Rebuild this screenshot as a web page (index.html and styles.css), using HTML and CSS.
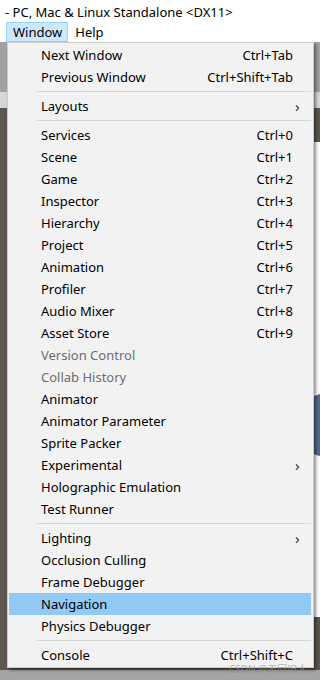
FILE: index.html
```html
<!DOCTYPE html>
<html lang="en">
<head>
    <meta charset="UTF-8">
    <meta name="viewport" content="width=device-width, initial-scale=1.0">
    <title>Window Menu</title>
    <link rel="stylesheet" href="styles.css">
</head>
<body>

    <div class="title-bar">- PC, Mac &amp; Linux Standalone &lt;DX11&gt;</div>

    <div class="menu-bar">
        <span class="menu-title active">Window</span>
        <span class="menu-title">Help</span>
    </div>

    <!-- Editor behind the menu -->
    <div class="workspace">
        <div class="toolbar"></div>
        <div class="tab-strip"></div>
        <div class="panels">
            <div class="panel-left"></div>
            <div class="panel-right">
                <div class="scene-view">
                    <div class="scene-blob"></div>
                </div>
            </div>
        </div>
        <div class="status-bar"></div>
    </div>

    <!-- Window dropdown -->
    <div class="dropdown">
        <div class="item"><span>Next Window</span><span class="key">Ctrl+Tab</span></div>
        <div class="item"><span>Previous Window</span><span class="key">Ctrl+Shift+Tab</span></div>
        <div class="sep"></div>
        <div class="item"><span>Layouts</span><span class="arrow">&rsaquo;</span></div>
        <div class="sep"></div>
        <div class="item"><span>Services</span><span class="key">Ctrl+0</span></div>
        <div class="item"><span>Scene</span><span class="key">Ctrl+1</span></div>
        <div class="item"><span>Game</span><span class="key">Ctrl+2</span></div>
        <div class="item"><span>Inspector</span><span class="key">Ctrl+3</span></div>
        <div class="item"><span>Hierarchy</span><span class="key">Ctrl+4</span></div>
        <div class="item"><span>Project</span><span class="key">Ctrl+5</span></div>
        <div class="item"><span>Animation</span><span class="key">Ctrl+6</span></div>
        <div class="item"><span>Profiler</span><span class="key">Ctrl+7</span></div>
        <div class="item"><span>Audio Mixer</span><span class="key">Ctrl+8</span></div>
        <div class="item"><span>Asset Store</span><span class="key">Ctrl+9</span></div>
        <div class="item disabled"><span>Version Control</span></div>
        <div class="item disabled"><span>Collab History</span></div>
        <div class="item"><span>Animator</span></div>
        <div class="item"><span>Animator Parameter</span></div>
        <div class="item"><span>Sprite Packer</span></div>
        <div class="item"><span>Experimental</span><span class="arrow">&rsaquo;</span></div>
        <div class="item"><span>Holographic Emulation</span></div>
        <div class="item"><span>Test Runner</span></div>
        <div class="sep"></div>
        <div class="item"><span>Lighting</span><span class="arrow">&rsaquo;</span></div>
        <div class="item"><span>Occlusion Culling</span></div>
        <div class="item"><span>Frame Debugger</span></div>
        <div class="item selected"><span>Navigation</span></div>
        <div class="item"><span>Physics Debugger</span></div>
        <div class="sep"></div>
        <div class="item"><span>Console</span><span class="key">Ctrl+Shift+C</span></div>
    </div>

    <div class="watermark">CSDN @不回旧人</div>

</body>
</html>
```

FILE: styles.css
```css
body {
    margin: 0;
    padding: 0;
    width: 320px;
    height: 680px;
    overflow: hidden;
    background-color: #ffffff;
    font-family: "Noto Sans", Arial, "Noto Sans CJK SC", sans-serif;
    font-size: 13px;
    color: #000;
    position: relative;
}
.title-bar {
    height: 22px;
    line-height: 24px;
    padding-left: 5px;
    font-size: 13px;
    white-space: nowrap;
}
.menu-bar {
    height: 20px;
    display: flex;
    align-items: flex-start;
    padding-left: 6px;
}
.menu-title {
    height: 18px;
    line-height: 18px;
    padding: 0 5px 0 6px;
    border: 1px solid transparent;
    font-size: 13px;
}
.menu-title.active {
    background-color: #cce8ff;
    border-color: #99d1ff;
}
/* Editor behind */
.workspace {
    height: 638px;
    display: flex;
    flex-direction: column;
}
.toolbar {
    height: 50px;
    background-color: #a2a2a2;
}
.tab-strip {
    height: 16px;
    background-color: #d6d6d6;
}
.panels {
    flex: 1;
    display: flex;
    background-color: #5c5550;
}
.panel-left {
    width: 200px;
}
.panel-right {
    flex: 1;
    padding-top: 34px;
    padding-bottom: 53px;
    display: flex;
}
.scene-view {
    flex: 1;
    background-color: #ffffff;
    position: relative;
    overflow: hidden;
}
.scene-blob {
    position: absolute;
    right: -20px;
    top: 252px;
    width: 30px;
    height: 62px;
    border-radius: 14px 0 0 14px;
    background-color: #56688c;
    border-left: 2px solid #222;
}
.status-bar {
    height: 10px;
    background-color: #a5a5a5;
}
/* Dropdown */
.dropdown {
    position: absolute;
    left: 7px;
    top: 42px;
    width: 305px;
    padding: 1px 0;
    background-color: #f2f2f2;
    border: 1px solid #cccccc;
    box-shadow: 2px 2px 3px rgba(0,0,0,0.45);
}
.item {
    display: flex;
    height: 22px;
    line-height: 22px;
    margin: 0 2px 0 1px;
    padding: 0 18px 0 32px;
    white-space: nowrap;
}
.item span:first-child {
    flex: 1;
}
.item .key {
    text-align: right;
}
.item .arrow {
    width: 16px;
    margin-right: -18px;
    padding-left: 2px;
    font-size: 15px;
    color: #333;
}
.item.disabled {
    color: #6d6d6d;
}
.item.selected {
    background-color: #91c9f7;
}
.sep {
    height: 1px;
    background-color: #d7d7d7;
    margin: 3px 2px 3px 29px;
}
.watermark {
    position: absolute;
    left: 229px;
    top: 663px;
    font-size: 10px;
    line-height: 12px;
    color: rgba(150,150,150,0.7);
    white-space: nowrap;
}
```
